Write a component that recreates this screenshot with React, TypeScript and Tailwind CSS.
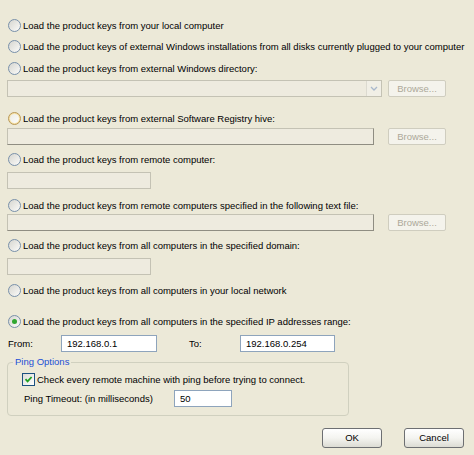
import React from "react";

const font = { fontFamily: '"Liberation Sans", Arial, sans-serif' };

type RadioKind = "normal" | "hover" | "checked";

function Radio({ kind = "normal", label, className = "" }: { kind?: RadioKind; label: string; className?: string }) {
  return (
    <div className={"flex items-center h-[13px] " + className}>
      <span
        className={
          "relative ml-[1px] w-[13px] h-[13px] rounded-full border flex items-center justify-center shrink-0 " +
          (kind === "hover"
            ? "border-[#b8985a] bg-[#f6e2a8]"
            : "border-[#7890aa] bg-gradient-to-br from-[#d6d6d0] to-[#fbfbf9]")
        }
      >
        {kind === "hover" && <span className="w-[9px] h-[9px] rounded-full bg-gradient-to-br from-[#ecece6] to-[#fdfdfb]" />}
        {kind === "checked" && <span className="w-[5px] h-[5px] rounded-full bg-[#2fa62f]" />}
      </span>
      <span className="ml-[2px] text-[9.5px] text-black whitespace-nowrap leading-none">{label}</span>
    </div>
  );
}

function DisabledField({ className = "", sunken = false }: { className?: string; sunken?: boolean }) {
  return (
    <div
      className={
        "h-[17px] bg-[#eeebdf] border " +
        (sunken ? "border-[#c4c2b4] border-r-[#8f8d82] border-b-[#8f8d82] " : "border-[#c4c2b4] ") +
        className
      }
    />
  );
}

function BrowseButton() {
  return (
    <div className="w-[58px] h-[17px] rounded-[2px] border border-[#cfcdbf] bg-[#f4f3ec] flex items-center justify-center text-[9.5px] text-[#aca899] leading-none">
      Browse...
    </div>
  );
}

function XpButton({ label }: { label: string }) {
  return (
    <div className="w-[60px] h-[20px] rounded-[3px] border border-[#6d6f72] bg-gradient-to-b from-[#ffffff] via-[#f4f4f0] to-[#dcdcd4] flex items-center justify-center text-[9.5px] text-black leading-none">
      {label}
    </div>
  );
}

function WhiteField({ value, className = "" }: { value: string; className?: string }) {
  return (
    <div className={"h-[17px] bg-white border border-[#8ea4bc] flex items-center pl-[5px] text-[9.5px] text-black leading-none " + className}>
      {value}
    </div>
  );
}

export default function App() {
  return (
    <div className="w-[474px] h-[455px] bg-[#ece9d8] px-[7px] flex flex-col" style={font}>
      <Radio label="Load the product keys from your local computer" className="mt-[19px]" />
      <Radio label="Load the product keys of external Windows installations from all disks currently plugged to your computer" className="mt-[8px]" />
      <Radio label="Load the product keys from external Windows directory:" className="mt-[9px]" />

      <div className="flex items-center mt-[5px]">
        <div className="w-[375px] h-[17px] bg-[#eeebdf] border border-[#c4c2b4] flex justify-end">
          <div className="w-[15px] h-full flex items-center justify-center bg-[#f1efe6] border-l border-[#dcdad0]">
            <svg width="8" height="5" viewBox="0 0 8 5">
              <path d="M1 1 L4 4 L7 1" fill="none" stroke="#a9b8cc" strokeWidth="1.3" />
            </svg>
          </div>
        </div>
        <div className="ml-[6px]">
          <BrowseButton />
        </div>
      </div>

      <Radio kind="hover" label="Load the product keys from external Software Registry hive:" className="mt-[15px]" />
      <div className="flex items-center mt-[3px]">
        <DisabledField sunken className="w-[367px]" />
        <div className="ml-[14px]">
          <BrowseButton />
        </div>
      </div>

      <Radio label="Load the product keys from remote computer:" className="mt-[8px]" />
      <DisabledField className="w-[144px] mt-[6px]" />

      <Radio label="Load the product keys from remote computers specified in the following text file:" className="mt-[10px]" />
      <div className="flex items-center mt-[2px]">
        <DisabledField sunken className="w-[367px]" />
        <div className="ml-[14px]">
          <BrowseButton />
        </div>
      </div>

      <Radio label="Load the product keys from all computers in the specified domain:" className="mt-[8px]" />
      <DisabledField className="w-[144px] mt-[6px]" />

      <Radio label="Load the product keys from all computers in your local network" className="mt-[9px]" />

      <Radio kind="checked" label="Load the product keys from all computers in the specified IP addresses range:" className="mt-[18px]" />

      <div className="flex items-center mt-[7px] text-[9.5px] text-black leading-none">
        <span className="w-[53px] ml-[1px]">From:</span>
        <WhiteField value="192.168.0.1" className="w-[96px]" />
        <span className="ml-[32px] w-[51px]">To:</span>
        <WhiteField value="192.168.0.254" className="w-[95px]" />
      </div>

      <div className="relative mt-[10px] w-[342px] h-[54px] rounded-[4px] border border-[#d0d0bf]">
        <span className="absolute -top-[6px] left-[5px] px-[2px] bg-[#ece9d8] text-[9.5px] text-[#1c4fd6] leading-none">
          Ping Options
        </span>
        <div className="flex items-center mt-[10px] ml-[14px]">
          <span className="w-[13px] h-[13px] border border-[#1c5180] bg-gradient-to-br from-[#dcdcd7] to-white flex items-center justify-center">
            <svg width="9" height="9" viewBox="0 0 9 9">
              <path d="M1.5 4.2 L3.6 6.4 L7.6 2" fill="none" stroke="#21a121" strokeWidth="1.8" />
            </svg>
          </span>
          <span className="ml-[2px] text-[9.5px] text-black leading-none">
            Check every remote machine with ping before trying to connect.
          </span>
        </div>
        <div className="flex items-center mt-[4px] ml-[16px] text-[9.5px] text-black leading-none">
          <span className="w-[150px]">Ping Timeout: (in milliseconds)</span>
          <WhiteField value="50" className="w-[58px]" />
        </div>
      </div>

      <div className="flex justify-end gap-[22px] mt-[12px] pr-[3px]">
        <XpButton label="OK" />
        <XpButton label="Cancel" />
      </div>
    </div>
  );
}
